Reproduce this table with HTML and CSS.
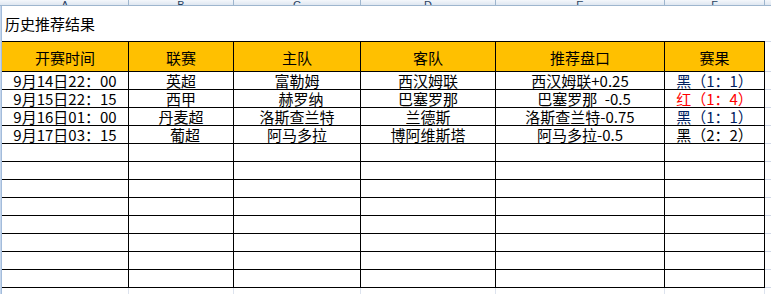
FILE: index.html
```html
<!DOCTYPE html>
<html lang="zh-CN">
<head>
<meta charset="utf-8">
<title>历史推荐结果</title>
<link rel="stylesheet" href="styles.css">
</head>
<body>
<div class="colhead">
  <span class="corner"></span>
  <span class="letter">A</span>
  <span class="letter">B</span>
  <span class="letter">C</span>
  <span class="letter">D</span>
  <span class="letter">E</span>
  <span class="letter">F</span>
  <span class="rest"></span>
</div>
<div class="sheet">
  <div class="edge"></div>
  <div class="main">
    <div class="title">历史推荐结果</div>
    <div class="row head">
      <div>开赛时间</div><div>联赛</div><div>主队</div><div>客队</div><div>推荐盘口</div><div>赛果</div><div class="gap"></div>
    </div>
    <div class="row">
      <div>9月14日22：00</div><div>英超</div><div>富勒姆</div><div>西汉姆联</div><div>西汉姆联+0.25</div><div class="navy">黑（1：1）</div><div class="gap"></div>
    </div>
    <div class="row">
      <div>9月15日22：15</div><div>西甲</div><div class="ind">赫罗纳</div><div>巴塞罗那</div><div class="ind">巴塞罗那&#8194;-0.5</div><div class="red">红（1：4）</div><div class="gap"></div>
    </div>
    <div class="row">
      <div>9月16日01：00</div><div>丹麦超</div><div>洛斯查兰特</div><div>兰德斯</div><div>洛斯查兰特-0.75</div><div class="navy">黑（1：1）</div><div class="gap"></div>
    </div>
    <div class="row">
      <div>9月17日03：15</div><div class="ind">葡超</div><div>阿马多拉</div><div>博阿维斯塔</div><div>阿马多拉-0.5</div><div>黑（2：2）</div><div class="gap"></div>
    </div>
    <div class="row"><div></div><div></div><div></div><div></div><div></div><div></div><div class="gap"></div></div>
    <div class="row"><div></div><div></div><div></div><div></div><div></div><div></div><div class="gap"></div></div>
    <div class="row"><div></div><div></div><div></div><div></div><div></div><div></div><div class="gap"></div></div>
    <div class="row"><div></div><div></div><div></div><div></div><div></div><div></div><div class="gap"></div></div>
    <div class="row"><div></div><div></div><div></div><div></div><div></div><div></div><div class="gap"></div></div>
    <div class="row"><div></div><div></div><div></div><div></div><div></div><div></div><div class="gap"></div></div>
    <div class="row"><div></div><div></div><div></div><div></div><div></div><div></div><div class="gap"></div></div>
    <div class="row"><div></div><div></div><div></div><div></div><div></div><div></div><div class="gap"></div></div>
    <div class="below"><div></div><div></div><div></div><div></div><div></div><div></div><div class="gap"></div></div>
  </div>
</div>
</body>
</html>
```
FILE: styles.css
```css
html, body {
  margin: 0;
  padding: 0;
}
body {
  width: 771px;
  height: 294px;
  overflow: hidden;
  background: #ffffff;
  font-family: "Noto Sans CJK SC", sans-serif;
  font-size: 15px;
  color: #000000;
}
.colhead {
  display: grid;
  grid-template-columns: 2px 127px 105px 127px 135px 169px 100px 6px;
  height: 5px;
  border-bottom: 1px solid #9eb6ce;
  background: linear-gradient(#f4f7fb, #dfe7f1);
  overflow: hidden;
}
.colhead .letter {
  box-sizing: border-box;
  border-right: 1px solid #9eb6ce;
  display: flex;
  align-items: flex-end;
  justify-content: center;
  font-family: "Liberation Sans", sans-serif;
  font-size: 11px;
  line-height: 10px;
  color: #27415f;
}
.sheet {
  display: flex;
}
.edge {
  width: 1px;
  height: 288px;
  background: #c5d6ec;
  border-right: 1px solid #a3bcdb;
}
.main {
  width: 769px;
}
.title {
  height: 35px;
  line-height: 35px;
  padding-left: 3px;
}
.row, .below {
  display: grid;
  grid-template-columns: 127px 105px 127px 135px 169px 100px 6px;
}
.row > div {
  box-sizing: border-box;
  height: 18px;
  line-height: 17px;
  border-right: 1px solid #000000;
  border-bottom: 1px solid #000000;
  text-align: center;
  white-space: pre;
}
.row > div.ind {
  padding-left: 8px;
}
.row > div.gap {
  border-right: none;
  border-bottom-color: #d0d7e5;
}
.head > div {
  height: 31px;
  line-height: 29px;
  padding-top: 1px;
  border-top: 1px solid #000000;
  background: #ffc000;
}
.head > div.gap {
  background: none;
  border-top-color: #d0d7e5;
}
.below > div {
  height: 6px;
  box-sizing: border-box;
  border-right: 1px solid #dde3ee;
}
.below > div.gap {
  border-right: none;
}
.navy {
  color: #002060;
}
.red {
  color: #ff0000;
}
```
